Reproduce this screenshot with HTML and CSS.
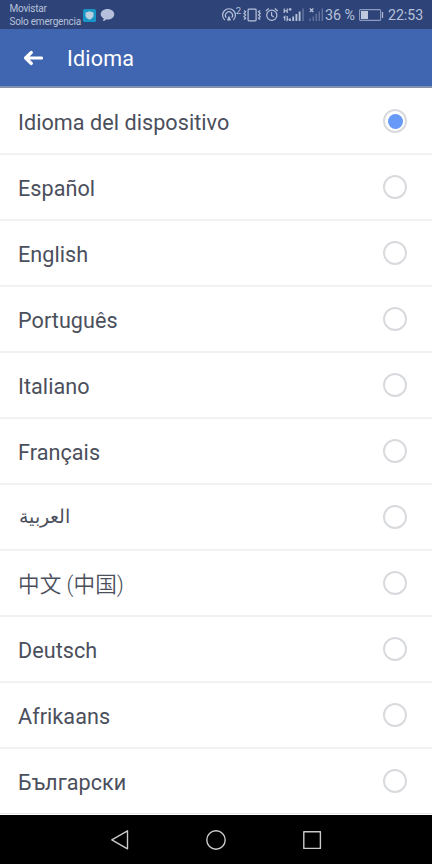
FILE: index.html
```html
<!DOCTYPE html>
<html lang="es">
<head>
<meta charset="utf-8">
<title>Idioma</title>
<link rel="stylesheet" href="styles.css">
</head>
<body>
<div class="screen">
  <div class="status">
    <div class="carrier"><span>Movistar</span><span>Solo emergencia</span></div>
    <svg class="notices" width="34" height="16" viewBox="82 7 34 16">
      <rect x="83" y="9" width="13" height="13" rx="1.5" fill="#1795c5"/>
      <path d="M89.5 11.3l4 1.1v3.2q0 2.4-4 4.1q-4-1.7-4-4.1v-3.2z" fill="#b9cfdf"/>
      <path d="M107.500 9c3.800 0 6.800 2.300 6.800 5.300s-3 5.300-6.800 5.300q-.8 0-1.500-.2q-1.200 1.500-3.200 1.700q.9-1.200.8-2.800c-1.800-1-2.900-2.400-2.900-4c0-3 3-5.300 6.800-5.300z" fill="#b6c0dc"/>
    </svg>
    <svg class="signals" width="104" height="22" viewBox="220 4 104 22">
      <g fill="none" stroke="#b8c1da" stroke-width="1.200">
        <path d="M224.800 20a6.400 6.400 0 1 1 8.400 0M226.300 17.600a3.500 3.500 0 1 1 5.400 0"/>
        <rect x="248.100" y="9.100" width="8" height="11.800" rx=".8"/>
        <path d="M244 10.500l1.700 1.300-1.700 1.600 1.700 1.600-1.700 1.600 1.700 1.600-1.700 1.300M260.200 10.500l-1.700 1.300 1.700 1.600-1.700 1.600 1.700 1.600-1.700 1.600 1.700 1.300"/>
        <circle cx="271.800" cy="15.300" r="5.100"/>
        <path d="M271.600 12v3.500l2.200 1.500M265.800 11l3-2.500M277.800 11l-3-2.500"/>
        <path d="M284.200 8.500v4.500M287.200 8.500v4.500M284.200 10.800h3M288.700 9.300h2.800M290.100 8v2.700M284.800 20.500v-4l-1.300 1.200M287.200 16v4.200l1.200-1.200M309.800 8.300l3.600 3.700M313.400 8.300l-3.600 3.700"/>
      </g>
      <path d="M226.900 20.500l2.100-5 2.100 5z" fill="#b8c1da"/>
      <text class="super" x="235.800" y="13.500">2</text>
      <path d="M290 18.500v2.500M293.200 16.500v4.500M296.400 14v7M299.600 11.500v9.500" stroke="#b8c1da" stroke-width="1.800"/>
      <path d="M303 8.500v12.500" stroke="#63759f" stroke-width="1.500"/>
      <path d="M310 18.500v2.500M313.300 16.500v4.500M316.300 14v7M319.300 11.500v9.500M322.300 8.500v12.500" stroke="#63759f" stroke-width="1.400"/>
    </svg>
    <span class="percent">36 %</span>
    <svg class="battery" width="26" height="14" viewBox="358 8 26 14">
      <rect x="359.600" y="9.600" width="21" height="10.800" rx="1" fill="none" stroke="#8d9bbf" stroke-width="1.100"/>
      <rect x="361" y="11" width="7" height="8" fill="#c0c8de"/>
      <path d="M382.500 12v6" stroke="#aab5d2" stroke-width="1.300"/>
    </svg>
    <span class="clock">22:53</span>
  </div>
  <header class="bar">
    <svg class="back" width="20" height="16" viewBox="0 0 20 16"><path d="M8.300 2.500L2.600 8l5.700 5.500M3 8h15.500" fill="none" stroke="#fff" stroke-width="3.200" stroke-linecap="round" stroke-linejoin="round"/></svg>
    <h1>Idioma</h1>
  </header>
  <main class="list">
    <div class="row"><span>Idioma del dispositivo</span><i class="radio on"></i></div>
    <div class="row"><span>Español</span><i class="radio"></i></div>
    <div class="row"><span>English</span><i class="radio"></i></div>
    <div class="row"><span>Português</span><i class="radio"></i></div>
    <div class="row"><span>Italiano</span><i class="radio"></i></div>
    <div class="row"><span>Français</span><i class="radio"></i></div>
    <div class="row"><span class="arabic" lang="ar">العربية</span><i class="radio"></i></div>
    <div class="row"><span class="chinese" lang="zh-CN">中文 (中国)</span><i class="radio"></i></div>
    <div class="row"><span>Deutsch</span><i class="radio"></i></div>
    <div class="row"><span>Afrikaans</span><i class="radio"></i></div>
    <div class="row"><span>Български</span><i class="radio"></i></div>
  </main>
  <nav class="nav">
    <svg width="20" height="22" viewBox="0 0 20 22"><path d="M17.500 1.800v18L1.800 10.800z"/></svg>
    <svg width="22" height="22" viewBox="0 0 22 22"><circle cx="11" cy="11" r="9.200"/></svg>
    <svg width="20" height="22" viewBox="0 0 20 22"><rect x="1.800" y="2.800" width="16.600" height="16.600"/></svg>
  </nav>
</div>
</body>
</html>
```
FILE: styles.css
```css
* { box-sizing: border-box; }
body { margin: 0; background: #fff; }
.screen {
  width: 432px;
  height: 864px;
  display: flex;
  flex-direction: column;
  overflow: hidden;
  font-family: Roboto, "Noto Sans CJK SC", sans-serif;
}
.status {
  height: 29px;
  flex: none;
  display: flex;
  align-items: center;
  background: #2e4478;
  color: #b8c1da;
}
.carrier {
  width: 72px;
  margin-left: 9.500px;
  display: flex;
  flex-direction: column;
  font-size: 10px;
  letter-spacing: -.2px;
  line-height: 13px;
  white-space: nowrap;
}
.notices { margin-left: .5px; }
.signals { margin-left: 104px; }
.super { font-size: 9.500px; fill: #b8c1da; }
.percent { width: 33px; margin-left: 1px; padding-top: 1px; font-size: 14.300px; white-space: nowrap; }
.clock { margin-left: 4px; padding-top: 1px; font-size: 14.100px; }
.bar {
  height: 59px;
  flex: none;
  display: flex;
  align-items: center;
  padding-left: 23px;
  background: #4166b1;
  border-bottom: 2px solid #8490ac;
  color: #fff;
}
.bar h1 {
  margin: 2px 0 0 24px;
  font-size: 21.500px;
  line-height: 26px;
  font-weight: 400;
  letter-spacing: .2px;
}
.list { flex: none; height: 727px; background: #fff; }
.row {
  height: 66px;
  display: flex;
  align-items: center;
  justify-content: space-between;
  padding: 0 25px 0 18px;
  color: #4b4f5c;
  font-size: 21.600px;
  letter-spacing: .05px;
  line-height: 28px;
}
.row + .row { border-top: 2px solid #f2f2f3; }
.row:first-child { height: 65px; padding-top: 1px; }
.row:last-child { height: 67px; border-bottom: 1px solid #e8e8ea; }
.row span { padding-top: 4px; }
.row .arabic { font-size: 18.600px; padding: 0 0 0 1px; }
.row .chinese { font-weight: 350; }
.radio {
  width: 24px;
  height: 24px;
  display: grid;
  place-items: center;
  border: 2px solid #d8dadd;
  border-radius: 50%;
}
.on::before {
  content: "";
  width: 15px;
  height: 15px;
  border-radius: 50%;
  background: #6699f8;
}
.nav {
  flex: 1;
  display: flex;
  align-items: center;
  justify-content: space-between;
  padding: 0 110px;
  background: #000;
}
.nav svg { fill: none; stroke: #cacaca; stroke-width: 1.400; stroke-linejoin: round; }
```
